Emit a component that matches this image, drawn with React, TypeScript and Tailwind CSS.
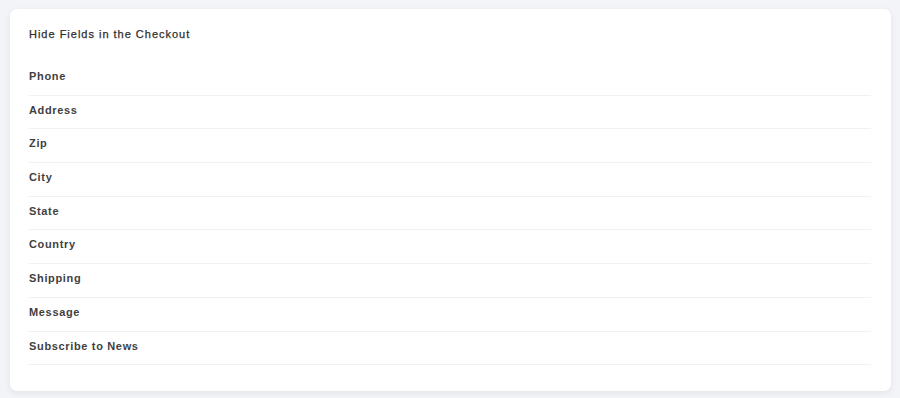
const fields = [
  "Phone",
  "Address",
  "Zip",
  "City",
  "State",
  "Country",
  "Shipping",
  "Message",
  "Subscribe to News",
];

export default function App() {
  return (
    <div className="w-[900px] h-[398px] bg-[#f3f4f7] pt-[9px] pl-[10px] pr-[9px] font-['Liberation_Sans',Arial,sans-serif]">
      <div className="bg-white rounded-[7px] shadow-[0_2px_6px_rgba(30,40,80,0.08)] pt-[17px] pb-[26px] pl-[19px] pr-[20px]">
        <h2 className="text-[11px] leading-4 font-normal tracking-[0.09em] text-[#2e2e2e] [-webkit-text-stroke:0.25px_#2e2e2e]">
          Hide Fields in the Checkout
        </h2>
        <ul className="mt-5">
          {fields.map((f) => (
            <li
              key={f}
              className="pt-[6px] pb-[10.7px] border-b border-[#f1f1f3] text-[11px] leading-4 font-bold tracking-[0.06em] text-[#3f3f3f]"
            >
              {f}
            </li>
          ))}
        </ul>
      </div>
    </div>
  );
}
